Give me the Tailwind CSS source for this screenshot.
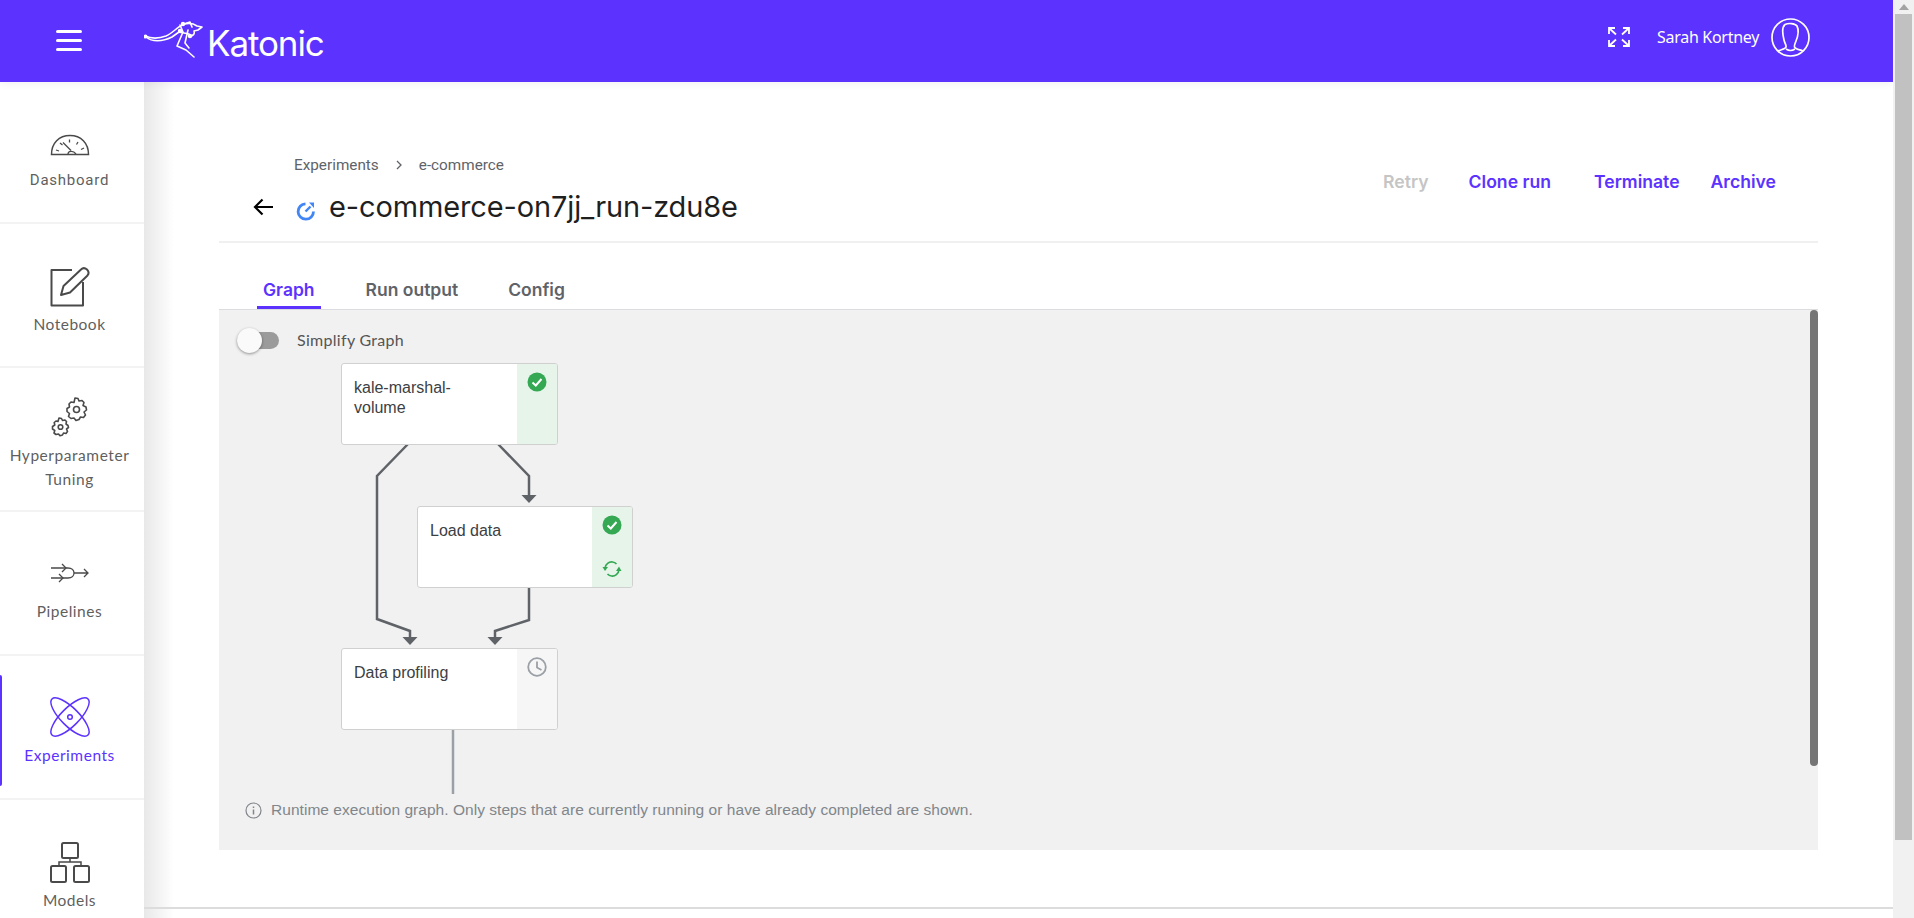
<!DOCTYPE html>
<html lang="en">
<head>
    <meta charset="UTF-8">
    <title>Katonic - Experiments</title>
    <script src="https://cdn.jsdelivr.net/npm/@tailwindcss/browser@4"></script>
</head>
<body class="h-[918px] w-[1914px] overflow-hidden bg-white font-['Roboto',sans-serif] flex">
    <div class="w-[1893px] h-[918px] flex flex-col overflow-hidden">
        <!-- Header -->
        <header class="h-[82px] shrink-0 bg-[#5c32ff] text-white flex items-center relative z-20 shadow-[0_2px_8px_rgba(0,0,0,0.06)]">
            <button class="ml-[56px] w-[26px] flex flex-col gap-[6px] -mt-[1px]">
                <span class="block h-[3px] bg-white rounded-sm"></span>
                <span class="block h-[3px] bg-white rounded-sm"></span>
                <span class="block h-[3px] bg-white rounded-sm"></span>
            </button>
            <div class="ml-[62px] flex items-end h-[40px] -mt-[4px]">
                <svg width="60" height="40" viewBox="0 0 60 40" fill="none" stroke="white" stroke-width="1.600" stroke-linecap="round" stroke-linejoin="round">
                    <path d="M1 17C8 20 14 20 22 17C29 14 33 8 40 5C44 4 49 4 53 7L58 8L54 11L50 12C51 15 49 17 46 17"/>
                    <path d="M2 18C8 23 18 23 28 18L35 13L45 15"/>
                    <path d="M36 6L39 13L33 27L42 31L50 38"/>
                    <path d="M44 11L41 24L45 29"/>
                    <path d="M40 5L46 3L48 8"/>
                    <circle cx="1.500" cy="17.500" r="1.200" fill="white"/>
                    <circle cx="39" cy="5" r="1.400" fill="white"/>
                    <circle cx="36" cy="12" r="1.400" fill="white"/>
                    <circle cx="46" cy="17" r="1.400" fill="white"/>
                </svg>
                <span class="ml-[3px] font-['Inter',sans-serif] font-normal text-[35px] leading-[36px] tracking-[-1.100px] -mb-[2px]">Katonic</span>
            </div>
            <div class="ml-auto flex items-center mr-[83px] -mt-[8px]">
                <svg width="22" height="20" viewBox="0 0 22 20" fill="none" stroke="white" stroke-width="1.800">
                    <path d="M1 7V1H7M1 1L8 7.500"/>
                    <path d="M21 7V1H15M21 1L14 7.500"/>
                    <path d="M1 13V19H7M1 19L8 12.500"/>
                    <path d="M21 13V19H15M21 19L14 12.500"/>
                </svg>
                <span class="ml-[27px] text-[16px] font-['Noto_Sans',sans-serif] tracking-[-0.3px]">Sarah Kortney</span>
                <svg class="ml-[12px]" width="39" height="39" viewBox="0 0 39 39" fill="none" stroke="white" stroke-width="1.700">
                    <circle cx="19.500" cy="19.500" r="18.500"/>
                    <path d="M14 6.500C17 5 24 5 26 8C28 12 27 18 25 23C24 26 23 27 23.500 29C24 31 28 31.500 32 33"/>
                    <path d="M14 6.500C11 9 11.500 16 13 22C14 26 15.500 27 15 29C14.500 31 10 31.500 7 33"/>
                    <path d="M15 31C18 33 21 33 24 31"/>
                </svg>
            </div>
        </header>

        <div class="flex flex-1 min-h-0">
            <!-- Sidebar -->
            <aside class="w-[144px] shrink-0 h-full bg-white relative z-10 text-[15.500px] text-[#5f5f5f] flex flex-col font-['Lato',sans-serif]">
                <a class="h-[142px] shrink-0 border-b-2 border-[#f3f3f3] flex flex-col items-center pt-[52px] pr-[5px]">
                    <svg width="40" height="22" viewBox="0 0 40 22" fill="none" stroke="#4a4a4a" stroke-width="1.500">
                        <path d="M1.500 20.500C1.500 9 9 1.500 20 1.500C31 1.500 38.500 9 38.500 20.500Z"/>
                        <path d="M6 16L9 17M10 9L12.500 11M19.500 5.500V8.500M28 8L26.500 10.500M34 14L31 15.500M13 8.500L21 16.500" stroke-width="1.300"/>
                        <path d="M18 20C18 17 23 16 26 20" stroke-width="1.300"/>
                    </svg>
                    <span class="mt-[14px] leading-[20px] tracking-[0.75px] font-['Roboto',sans-serif] text-[15px]">Dashboard</span>
                </a>
                <a class="h-[144px] shrink-0 border-b-2 border-[#f3f3f3] flex flex-col items-center pt-[43px] pr-[5px]">
                    <svg width="40" height="40" viewBox="0 0 40 40" fill="none" stroke="#4a4a4a" stroke-width="2" stroke-linejoin="round">
                        <path d="M22 3H1.500V38.500H33V15"/>
                        <path d="M11 28L13.500 19L31 2.500C33 0.500 35 0.800 37 2.500C39 4.500 39 6.500 37.500 8.500L20 25.500Z"/>
                    </svg>
                    <span class="mt-[7px] leading-[20px] tracking-[0.5px]">Notebook</span>
                </a>
                <a class="h-[144px] shrink-0 border-b-2 border-[#f3f3f3] flex flex-col items-center pt-[29px] pr-[5px]">
                    <svg width="40" height="40" viewBox="0 0 40 40" fill="none" stroke="#4a4a4a" stroke-width="1.600" stroke-linejoin="round">
                        <path d="M25 1L28 1.500L29 4L32 3.500L34 5.500L33 8.500L36 10L36.500 13L34 15L35.500 18L33.500 20.500L30.500 20L29 22.500L26 23.500L24 21L21 21.500L18.500 19.500L19.500 16.500L17 14.500L17 11.500L19.500 10L19 7L21 5L24 5.500Z"/>
                        <circle cx="26.500" cy="12.500" r="3"/>
                        <path d="M9 21L11.500 21.500L12.500 23.500L15 23L16.500 24.500L16 27L18 28.500L18.500 30.500L16.500 32L17.500 34.500L16 36.500L13.500 36L12.500 38L10 38.800L8.500 37L6 37.500L4 36L4.800 33.500L2.500 32L2.500 29.500L4.800 28L4.200 25.500L6 24L8 24.500Z"/>
                        <circle cx="10.500" cy="30" r="2.300"/>
                    </svg>
                    <span class="mt-[6px] leading-[24px] text-center tracking-[0.55px]">Hyperparameter<br>Tuning</span>
                </a>
                <a class="h-[144px] shrink-0 border-b-2 border-[#f3f3f3] flex flex-col items-center pt-[51px] pr-[5px]">
                    <svg width="40" height="20" viewBox="0 0 40 20" fill="none" stroke="#4a4a4a" stroke-width="1.300">
                        <path d="M1 5H18C26 5 26 15 18 15H1"/>
                        <path d="M24 10H38M34 6L38 10L34 14"/>
                        <path d="M12 1L16 5L12 9M9 11L13 15L9 19"/>
                    </svg>
                    <span class="mt-[18px] leading-[20px] tracking-[0.5px]">Pipelines</span>
                </a>
                <a class="h-[144px] shrink-0 border-b-2 border-[#f3f3f3] flex flex-col items-center pt-[41px] pr-[5px] relative text-[#5c32ff]">
                    <span class="absolute left-0 top-[19px] w-[2px] h-[111px] bg-[#5c32ff] rounded-r"></span>
                    <svg width="40" height="40" viewBox="0 0 40 40" fill="none" stroke="#5c32ff" stroke-width="1.500">
                        <ellipse cx="20" cy="20" rx="25.500" ry="9" transform="rotate(45 20 20)"/>
                        <ellipse cx="20" cy="20" rx="25.500" ry="9" transform="rotate(-45 20 20)"/>
                        <circle cx="20" cy="20" r="2.300"/>
                    </svg>
                    <span class="mt-[8px] leading-[20px] tracking-[0.55px]">Experiments</span>
                </a>
                <a class="h-[144px] shrink-0 flex flex-col items-center pt-[42px] pr-[5px]">
                    <svg width="40" height="42" viewBox="0 0 40 42" fill="none" stroke="#4a4a4a" stroke-width="2">
                        <rect x="12" y="1" width="16" height="15" rx="1.500"/>
                        <rect x="1" y="24" width="15" height="16" rx="1.500"/>
                        <rect x="24" y="24" width="15" height="16" rx="1.500"/>
                        <path d="M20 16V20M9 24V20H31V24" stroke-width="1.500"/>
                    </svg>
                    <span class="mt-[6px] leading-[20px] tracking-[0.5px]">Models</span>
                </a>
            </aside>

            <!-- Main -->
            <main class="flex-1 min-w-0 bg-[linear-gradient(to_right,#e8e8e8,#ffffff_30px)] flex flex-col">
                <div class="ml-[75px] mr-[75px] h-[825px] shrink-0 flex flex-col">
                    <div class="h-[161px] shrink-0 border-b-2 border-[#f0f0f0] relative">
                        <div class="absolute left-[75px] top-[73px] flex items-center text-[15.300px] leading-[20px] text-[#5f6368]">
                            <span>Experiments</span>
                            <svg class="mx-[17px]" width="6" height="10" viewBox="0 0 6 10" fill="none" stroke="#5f6368" stroke-width="1.300"><path d="M1 1L5 5L1 9"/></svg>
                            <span>e-commerce</span>
                        </div>
                        <div class="absolute left-[34px] top-[108px] flex items-center">
                            <svg width="20" height="18" viewBox="0 0 20 18" fill="none" stroke="#000" stroke-width="2.200"><path d="M20 9H2M9.500 1.500L2 9L9.500 16.500"/></svg>
                            <svg class="ml-[23px] mt-[8px]" width="20" height="20" viewBox="0 0 20 20" fill="none">
                                <path d="M9.500 2.800A7.700 7.700 0 1 0 17.500 10.500" stroke="#4285f4" stroke-width="2.800"/>
                                <path d="M9.500 10.500L14.500 5.500" stroke="#4285f4" stroke-width="2.400"/>
                                <path d="M13 1.500H18V7Z" fill="#4285f4"/>
                            </svg>
                            <h1 class="ml-[13px] text-[29px] leading-[34px] text-[#1f1f1f] font-['Inter',sans-serif] font-normal tracking-[-0.13px]">e-commerce-on7jj_run-zdu8e</h1>
                        </div>
                        <div class="absolute right-[42px] top-[88px] flex text-[17.600px] leading-[24px] font-semibold font-['Inter',sans-serif] text-[#5c32ff]">
                            <span class="text-[#c5c5c5]">Retry</span>
                            <span class="ml-[40px]">Clone run</span>
                            <span class="ml-[43px]">Terminate</span>
                            <span class="ml-[31px]">Archive</span>
                        </div>
                    </div>
                    <!-- Tabs -->
                    <div class="h-[67px] shrink-0 flex text-[17.500px] font-semibold font-['Inter',sans-serif] text-[#5f6368] border-b border-[#dadce0] pl-[38px]">
                        <a class="px-[6px] pt-[35px] leading-[24px] border-b-[3px] border-[#5c32ff] text-[#5c32ff] h-[66px]">Graph</a>
                        <a class="ml-[45px] pt-[35px] leading-[24px]">Run output</a>
                        <a class="ml-[50px] pt-[35px] leading-[24px]">Config</a>
                    </div>
                    <!-- Graph panel -->
                    <div class="h-[540px] shrink-0 bg-[#f1f1f1] relative flex flex-col">
                        <div class="h-[484px] shrink-0 relative">
                            <div class="absolute left-[18px] top-[20px] flex items-center">
                                <div class="w-[42px] h-[17px] rounded-full bg-[#9b9b9b] relative">
                                    <span class="absolute left-0 top-[-4px] w-[25px] h-[25px] rounded-full bg-[#fafafa] shadow-[0_1px_3px_rgba(0,0,0,0.4)]"></span>
                                </div>
                                <span class="ml-[18px] text-[16px] leading-[20px] text-[#555] font-['Lato',sans-serif] tracking-[0.3px]">Simplify Graph</span>
                            </div>

                            <svg class="absolute left-0 top-0" width="500" height="484" fill="none" stroke="#5f6368" stroke-width="2.500">
                                <path d="M189 134L158 166V309L191 321V328"/>
                                <path d="M279 134L310 166V186"/>
                                <path d="M310 277V310L276 321V328"/>
                                <path d="M234 420V484" stroke="#9aa0a6"/>
                                <g fill="#5f6368" stroke="none">
                                    <path d="M302.500 185H317.500L310 193Z"/>
                                    <path d="M183.500 327H198.500L191 335Z"/>
                                    <path d="M268.500 327H283.500L276 335Z"/>
                                </g>
                            </svg>

                            <!-- kale-marshal-volume -->
                            <div class="absolute left-[122px] top-[53px] w-[217px] h-[82px] bg-white rounded-[3px] border border-[#d0d0d0] flex overflow-hidden">
                                <div class="flex-1 pl-[12px] pt-[14px] text-[16px] leading-[20px] text-[#3c4043] font-['Liberation_Sans',sans-serif]">kale-marshal-<br>volume</div>
                                <div class="w-[40px] bg-[#e6f4ea] flex justify-center pt-[8px]">
                                    <svg width="20" height="20" viewBox="0 0 20 20"><circle cx="10" cy="10" r="9.500" fill="#34a853"/><path d="M5.500 10.500L8.800 13.500L14.500 7" fill="none" stroke="white" stroke-width="2"/></svg>
                                </div>
                            </div>
                            <!-- Load data -->
                            <div class="absolute left-[198px] top-[196px] w-[216px] h-[82px] bg-white rounded-[3px] border border-[#d0d0d0] flex overflow-hidden">
                                <div class="flex-1 pl-[12px] pt-[14px] text-[16px] leading-[20px] text-[#3c4043] font-['Liberation_Sans',sans-serif]">Load data</div>
                                <div class="w-[40px] bg-[#e6f4ea] flex flex-col items-center justify-between pt-[8px] pb-[9px]">
                                    <svg width="20" height="20" viewBox="0 0 20 20"><circle cx="10" cy="10" r="9.500" fill="#34a853"/><path d="M5.500 10.500L8.800 13.500L14.500 7" fill="none" stroke="white" stroke-width="2"/></svg>
                                    <svg width="20" height="18" viewBox="0 0 20 18" fill="none" stroke="#34a853" stroke-width="1.700">
                                        <path d="M3 8C3.500 4 7 1.500 10.500 2C12.500 2.300 13.500 3 14.500 4"/>
                                        <path d="M17 10C16.500 14 13 16.500 9.500 16C7.500 15.700 6.500 15 5.500 14"/>
                                        <path d="M0.500 7H6L3 11Z" fill="#34a853" stroke="none"/>
                                        <path d="M14 11H19.500L17 6.500Z" fill="#34a853" stroke="none"/>
                                    </svg>
                                </div>
                            </div>
                            <!-- Data profiling -->
                            <div class="absolute left-[122px] top-[338px] w-[217px] h-[82px] bg-white rounded-[3px] border border-[#d0d0d0] flex overflow-hidden">
                                <div class="flex-1 pl-[12px] pt-[14px] text-[16px] leading-[20px] text-[#3c4043] font-['Liberation_Sans',sans-serif]">Data profiling</div>
                                <div class="w-[40px] bg-[#f6f6f6] flex justify-center pt-[8px]">
                                    <svg width="20" height="20" viewBox="0 0 20 20" fill="none" stroke="#9aa0a6" stroke-width="1.800"><circle cx="10" cy="10" r="8.800"/><path d="M10 4.500V10.500L14.500 13"/></svg>
                                </div>
                            </div>

                            <!-- graph scrollbar -->
                            <div class="absolute right-0 top-0 w-[8px] h-[456px] bg-[#757575] rounded-full"></div>
                        </div>
                        <div class="flex items-center pl-[26px] mt-[6px] text-[15.500px] tracking-[0.04px] leading-[20px] text-[#80868b] font-['Liberation_Sans',sans-serif]">
                            <svg class="mr-[9px]" width="17" height="17" viewBox="0 0 17 17" fill="none" stroke="#80868b" stroke-width="1.200"><circle cx="8.500" cy="8.500" r="7.500"/><path d="M8.500 7.500V12.500" stroke-width="1.500"/><path d="M8.500 4.500V6" stroke-width="1.500"/></svg>
                            <span>Runtime execution graph. Only steps that are currently running or have already completed are shown.</span>
                        </div>
                    </div>
                </div>
                <div class="h-[2px] bg-[#dcdcdc]"></div>
            </main>
        </div>
    </div>

    <!-- Page scrollbar -->
    <div class="w-[21px] h-[918px] bg-[#f1f1f1] shrink-0 relative">
        <svg class="mx-auto mt-[4px]" width="10" height="6" viewBox="0 0 10 6"><path d="M5 0L10 6H0Z" fill="#a3a3a3"/></svg>
        <div class="mx-auto mt-[4px] w-[17px] h-[826px] bg-[#c1c1c1]"></div>
    </div>
</body>
</html>
